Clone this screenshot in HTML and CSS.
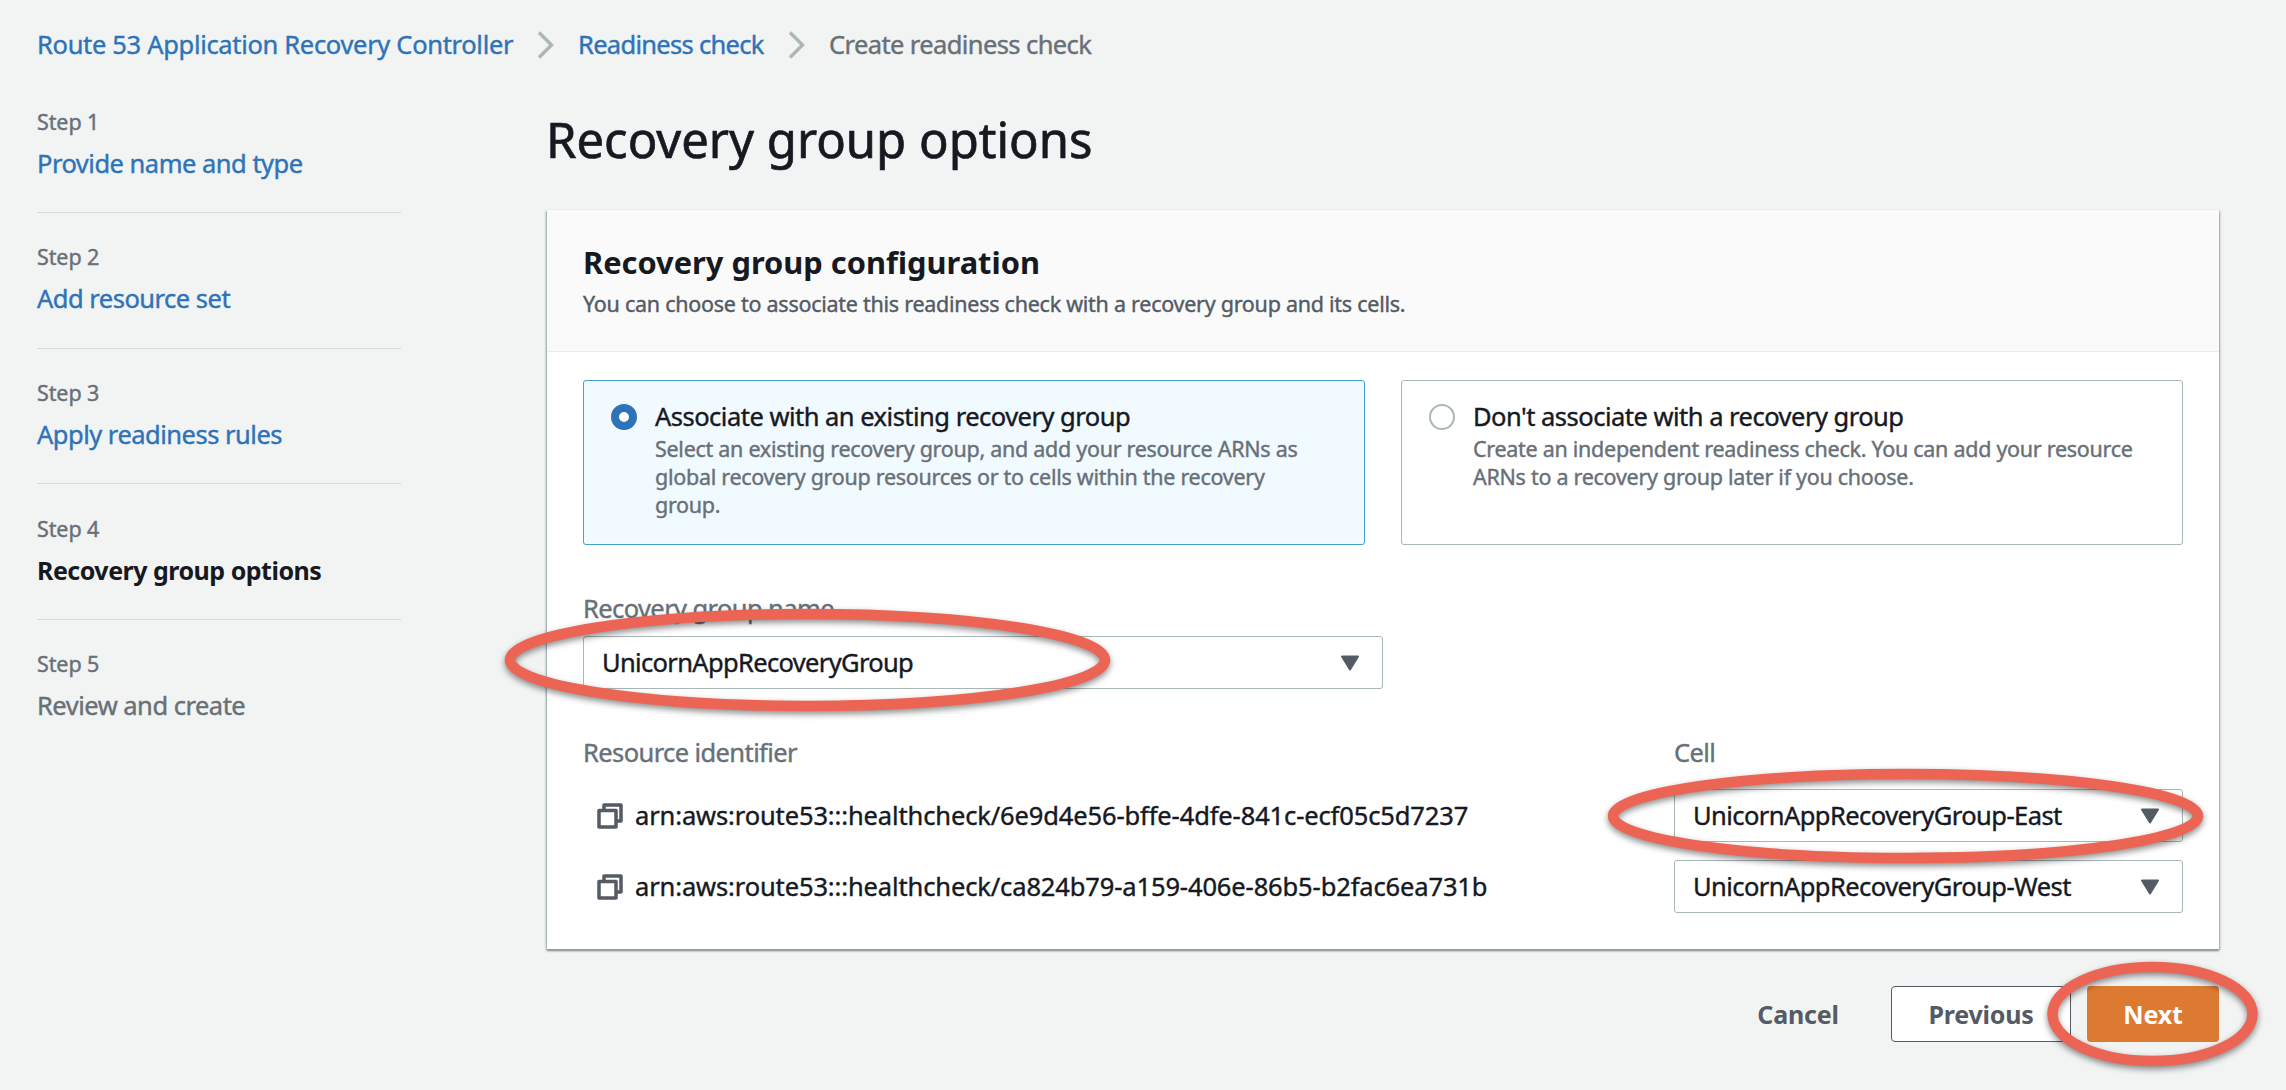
FILE: index.html
```html
<!DOCTYPE html>
<html lang="en">
<head>
<meta charset="utf-8">
<title>Create readiness check</title>
<link rel="stylesheet" href="styles.css">
</head>
<body>
<nav class="breadcrumb">
  <a class="crumb crumb-service">Route 53 Application Recovery Controller</a>
  <svg class="chevron" viewBox="0 0 17 28"><path d="M2 1.5 14.5 14 2 26.5"/></svg>
  <a class="crumb crumb-parent">Readiness check</a>
  <svg class="chevron" viewBox="0 0 17 28"><path d="M2 1.5 14.5 14 2 26.5"/></svg>
  <span class="crumb crumb-current">Create readiness check</span>
</nav>
<div class="layout">
  <ol class="steps">
    <li class="step"><span class="step-no">Step 1</span><a class="step-name link">Provide name and type</a></li>
    <li class="step"><span class="step-no">Step 2</span><a class="step-name link">Add resource set</a></li>
    <li class="step"><span class="step-no">Step 3</span><a class="step-name link">Apply readiness rules</a></li>
    <li class="step"><span class="step-no">Step 4</span><span class="step-name active">Recovery group options</span></li>
    <li class="step"><span class="step-no">Step 5</span><span class="step-name">Review and create</span></li>
  </ol>
  <main class="content">
    <h1 class="title">Recovery group options</h1>
    <section class="card">
      <header class="card-header">
        <h2 class="card-title">Recovery group configuration</h2>
        <p class="card-desc">You can choose to associate this readiness check with a recovery group and its cells.</p>
      </header>
      <div class="card-body">
        <div class="tiles">
          <label class="tile selected">
            <span class="radio checked"></span>
            <span class="tile-text">
              <span class="tile-label">Associate with an existing recovery group</span>
              <span class="tile-desc">Select an existing recovery group, and add your resource ARNs as<br>global recovery group resources or to cells within the recovery<br>group.</span>
            </span>
          </label>
          <label class="tile">
            <span class="radio"></span>
            <span class="tile-text">
              <span class="tile-label">Don't associate with a recovery group</span>
              <span class="tile-desc">Create an independent readiness check. You can add your resource<br>ARNs to a recovery group later if you choose.</span>
            </span>
          </label>
        </div>
        <div class="field-label">Recovery group name</div>
        <div class="select select-group"><span>UnicornAppRecoveryGroup</span><svg class="arrow" viewBox="0 0 20 16"><path d="M2 1.5h16L10 14.5z"/></svg></div>
        <div class="resources">
          <div class="field-label">Resource identifier</div>
          <div class="field-label">Cell</div>
          <div class="resource">
            <svg class="copy" viewBox="0 0 26 26"><path d="M7 7V2h17v16h-5M2 7.500h17v16.500H2z"/></svg>
            <span class="arn">arn:aws:route53:::healthcheck/6e9d4e56-bffe-4dfe-841c-ecf05c5d7237</span>
          </div>
          <div class="select"><span>UnicornAppRecoveryGroup-East</span><svg class="arrow" viewBox="0 0 20 16"><path d="M2 1.5h16L10 14.5z"/></svg></div>
          <div class="resource">
            <svg class="copy" viewBox="0 0 26 26"><path d="M7 7V2h17v16h-5M2 7.500h17v16.500H2z"/></svg>
            <span class="arn">arn:aws:route53:::healthcheck/ca824b79-a159-406e-86b5-b2fac6ea731b</span>
          </div>
          <div class="select"><span>UnicornAppRecoveryGroup-West</span><svg class="arrow" viewBox="0 0 20 16"><path d="M2 1.5h16L10 14.5z"/></svg></div>
        </div>
      </div>
    </section>
    <div class="actions">
      <button class="btn btn-link">Cancel</button>
      <button class="btn btn-normal">Previous</button>
      <button class="btn btn-primary">Next</button>
    </div>
  </main>
</div>
<svg class="marks" viewBox="0 0 2286 1090">
  <ellipse cx="807.500" cy="660" rx="297.500" ry="46"/>
  <ellipse cx="1905.500" cy="816" rx="292.500" ry="42"/>
  <ellipse cx="2152.500" cy="1014" rx="100" ry="47"/>
</svg>
</body>
</html>
```
FILE: styles.css
```css
* { box-sizing: border-box; }

body {
  margin: 0;
  position: relative;
  width: 2286px;
  height: 1090px;
  overflow: hidden;
  background: #f2f3f3;
  color: #16191f;
  font-family: "Noto Sans", sans-serif;
  font-size: 25.5px;
  line-height: 35px;
  letter-spacing: -0.6px;
  -webkit-text-stroke: 0.4px;
}

.breadcrumb {
  display: flex;
  align-items: center;
  padding: 26px 37px 0;
  height: 63px;
  color: #687078;
  white-space: nowrap;
}
.crumb-service { width: 500px; color: #2e73b8; letter-spacing: -0.32px; }
.crumb-parent { width: 210px; color: #2e73b8; letter-spacing: -0.7px; }
.chevron { width: 17px; height: 28px; margin-right: 24px; flex: none; }
.chevron path { fill: none; stroke: #aab7b8; stroke-width: 3.4; }

.layout { display: flex; padding-left: 37px; }

.steps {
  list-style: none;
  margin: 0;
  padding: 14.5px 0 0;
  width: 364px;
  flex: none;
}
.step {
  display: flex;
  flex-direction: column;
  gap: 9px;
  height: 135.670px;
  padding-top: 29.200px;
  border-bottom: 1px solid #d5dbdb;
}
.step:last-child { border-bottom: 0; }
.step-no { font-size: 21.5px; line-height: 30px; letter-spacing: -0.1px; color: #687078; }
.step-name { color: #687078; letter-spacing: -0.5px; }
.link { color: #2e73b8; }
.active { color: #16191f; font-weight: 700; font-size: 25px; -webkit-text-stroke: 0; }

.content { margin-left: 146px; width: 1672px; }
.title {
  margin: 46px 0 40px -1px;
  font-size: 49px;
  line-height: 61px;
  font-weight: 400;
  letter-spacing: 0;
  -webkit-text-stroke: 0.7px;
}

.card {
  background: #fff;
  height: 739px;
  box-shadow: 0 -1px 0 #eaeded, 0 2px 2px #879596, 1px 1px 2px #aab7b8, -1px 1px 2px #aab7b8;
}
.card-header {
  height: 142px;
  padding: 32px 36px 0;
  background: #fafafa;
  border-bottom: 1px solid #eaeded;
}
.card-title { margin: 0; font-size: 30.8px; line-height: 40px; letter-spacing: 0; -webkit-text-stroke: 0; }
.card-desc {
  margin: 7px 0 0;
  font-size: 21.5px;
  line-height: 30px;
  letter-spacing: -0.26px;
  color: #545b64;
}
.card-body { padding: 28px 36px 0; }

.tiles { display: grid; grid-template-columns: 1fr 1fr; gap: 36px; }
.tile {
  display: flex;
  gap: 18px;
  height: 165px;
  padding: 18px 27px;
  border: 1px solid #aab7b8;
  border-radius: 3px;
}
.selected { background: #f1faff; border-color: #44a2c8; }
.radio {
  width: 26px;
  height: 26px;
  margin-top: 5px;
  flex: none;
  border: 2px solid #aab7b8;
  border-radius: 50%;
  background: #fff;
}
.checked { border: 8px solid #2e73b8; }
.tile-text { display: flex; flex-direction: column; white-space: nowrap; }
.tile-label { letter-spacing: -0.51px; }
.tile-desc { margin-top: 1px; font-size: 21.5px; line-height: 27.8px; letter-spacing: -0.28px; color: #687078; }

.field-label { color: #687078; }
.tiles + .field-label { margin-top: 46px; }
.select {
  display: flex;
  align-items: center;
  justify-content: space-between;
  height: 53px;
  padding: 0 22px 0 18px;
  border: 1px solid #aab7b8;
  border-radius: 3px;
  background: #fff;
  letter-spacing: -0.56px;
}
.select-group { width: 800px; margin-top: 10px; letter-spacing: -0.66px; }
.arrow { width: 20px; height: 16px; }
.arrow path { fill: #545b64; stroke: #545b64; stroke-width: 2; stroke-linejoin: round; }

.resources {
  display: grid;
  grid-template-columns: 1091px 509px;
  grid-template-rows: 35px 53px 53px;
  row-gap: 18px;
  margin-top: 47px;
}
.resources .field-label { margin-top: -1px; }
.resource { display: flex; align-items: center; gap: 12px; padding-left: 14px; }
.copy { width: 26px; height: 26px; flex: none; }
.copy path { fill: none; stroke: #545b64; stroke-width: 3.500; stroke-linejoin: round; }
.arn { letter-spacing: -0.13px; }

.actions { display: flex; justify-content: flex-end; gap: 16px; margin-top: 37px; }
.btn {
  height: 56px;
  padding: 0;
  border: 1px solid transparent;
  border-radius: 4px;
  background: none;
  color: #545b64;
  font: 700 25px/35px "Noto Sans", sans-serif;
  letter-spacing: -0.2px;
  -webkit-text-stroke: 0;
}
.btn-link { width: 154px; }
.btn-normal { width: 180px; background: #fff; border-color: #545b64; }
.btn-primary { width: 132px; background: #dd7a31; color: #fff; }

/* Highlight rings drawn over the page */
.marks {
  position: absolute;
  inset: 0;
  width: 2286px;
  height: 1090px;
  pointer-events: none;
  filter: drop-shadow(0 3px 3px rgba(0, 0, 0, 0.45));
}
.marks ellipse { fill: none; stroke: #ec6453; stroke-width: 10.500; }
```
